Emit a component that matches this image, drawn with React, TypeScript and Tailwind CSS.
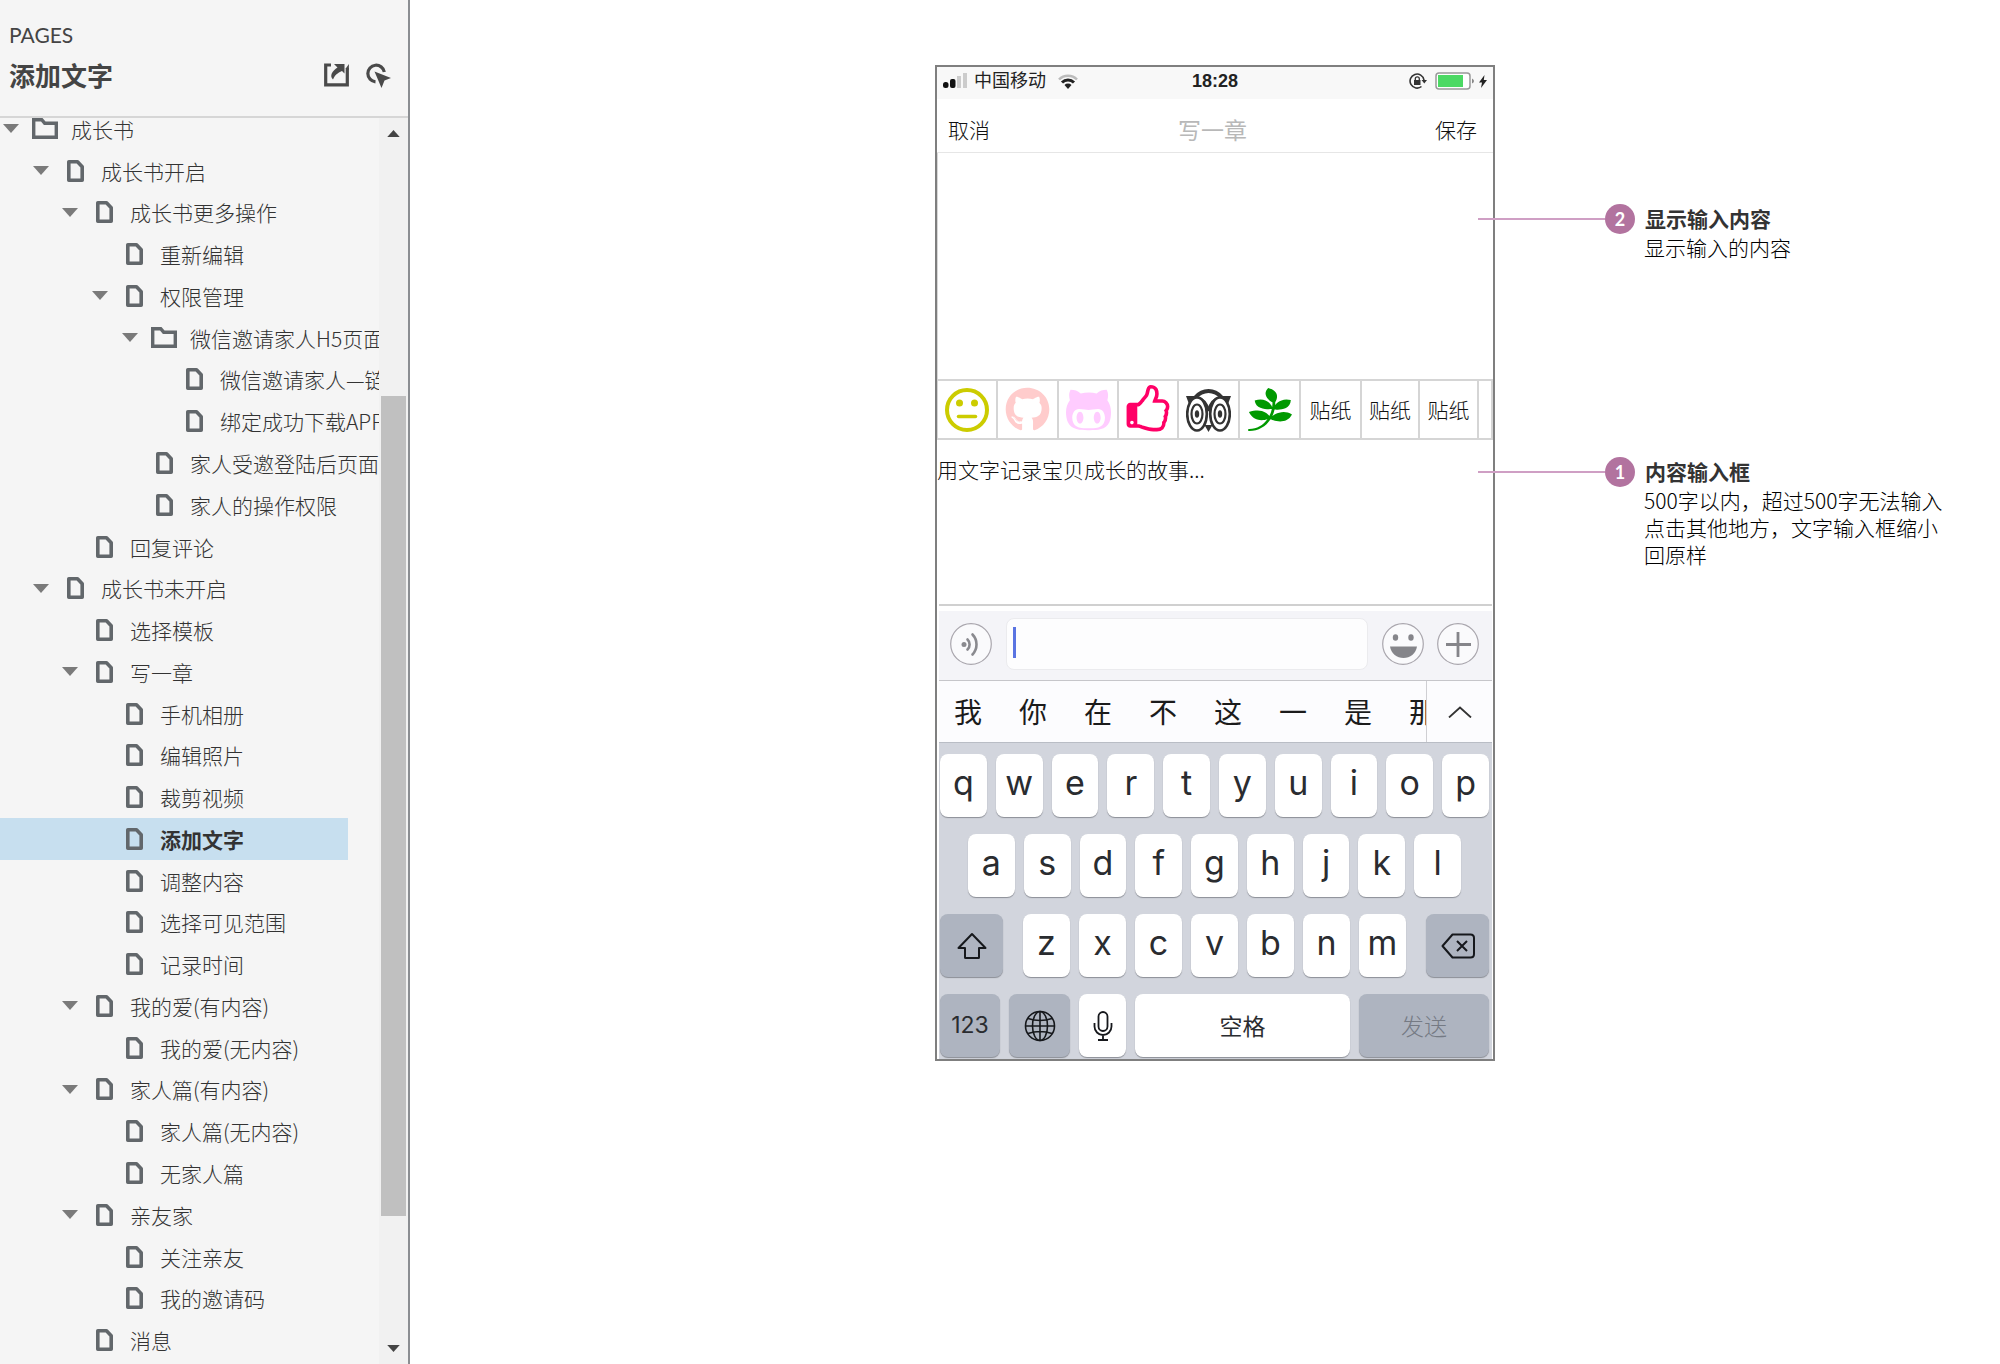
import type { ReactNode } from "react";
import { FaGithub, FaGithubAlt, FaPagelines } from "react-icons/fa";
import clsx from "clsx";

type TreeItem = {
  name: string;
  level: number;
  open?: boolean;
  folder?: boolean;
  active?: boolean;
};

const PAGES: TreeItem[] = [
  { name: "成长书", level: 0, open: true, folder: true },
  { name: "成长书开启", level: 1, open: true },
  { name: "成长书更多操作", level: 2, open: true },
  { name: "重新编辑", level: 3 },
  { name: "权限管理", level: 3, open: true },
  { name: "微信邀请家人H5页面", level: 4, open: true, folder: true },
  { name: "微信邀请家人—链接", level: 5 },
  { name: "绑定成功下载APP", level: 5 },
  { name: "家人受邀登陆后页面", level: 4 },
  { name: "家人的操作权限", level: 4 },
  { name: "回复评论", level: 2 },
  { name: "成长书未开启", level: 1, open: true },
  { name: "选择模板", level: 2 },
  { name: "写一章", level: 2, open: true },
  { name: "手机相册", level: 3 },
  { name: "编辑照片", level: 3 },
  { name: "裁剪视频", level: 3 },
  { name: "添加文字", level: 3, active: true },
  { name: "调整内容", level: 3 },
  { name: "选择可见范围", level: 3 },
  { name: "记录时间", level: 3 },
  { name: "我的爱(有内容)", level: 2, open: true },
  { name: "我的爱(无内容)", level: 3 },
  { name: "家人篇(有内容)", level: 2, open: true },
  { name: "家人篇(无内容)", level: 3 },
  { name: "无家人篇", level: 3 },
  { name: "亲友家", level: 2, open: true },
  { name: "关注亲友", level: 3 },
  { name: "我的邀请码", level: 3 },
  { name: "消息", level: 2 },
];

const INDENT = ["pl-[3px]", "pl-[33px]", "pl-[62px]", "pl-[92px]", "pl-[122px]", "pl-[152px]"];

const CANDIDATES = ["我", "你", "在", "不", "这", "一", "是", "那"];

/* ---------- icons ---------- */

function Triangle({ className }: { className: string }) {
  return (
    <svg viewBox="0 0 16 9" className={className} fill="currentColor" aria-hidden="true">
      <path d="M0 0h16L8 9z" />
    </svg>
  );
}

function DocIcon() {
  return (
    <svg width="17" height="22" viewBox="0 0 17 22" fill="none" stroke="#62676b" strokeWidth="3.6" aria-hidden="true">
      <path d="M1.800 1.800h8.700l4.700 5v13.400H1.800z" strokeLinejoin="round" />
    </svg>
  );
}

function FolderIcon() {
  return (
    <svg width="26" height="21" viewBox="0 0 26 21" fill="none" stroke="#62676b" strokeWidth="3.4" aria-hidden="true">
      <path d="M1.700 1.700h8l3 3.500h11.600v14.100H1.700z" />
    </svg>
  );
}

function ShareIcon() {
  return (
    <svg width="25" height="24" viewBox="0 0 25 24" aria-hidden="true">
      <path d="M7 2H1.700v19.800h21.600V5" fill="none" stroke="#4a4a4a" strokeWidth="3.2" />
      <path d="M10 1h10.500v9.500l-2.500-2.500C13.500 10 11 12 9 16.500 5 13 8.500 7.500 13.500 4.500z" fill="#4a4a4a" />
      <path d="M21.700 5.500 24.900 1v6z" fill="#4a4a4a" />
    </svg>
  );
}

function PointerIcon() {
  return (
    <svg width="25" height="25" viewBox="0 0 25 25" aria-hidden="true">
      <path d="M9.500 18.800A8.300 8.300 0 1 1 18.300 9" fill="none" stroke="#4a4a4a" strokeWidth="3.2" />
      <path d="M8.500 8.500 25 15l-6.500 2.500-3 7.500z" fill="#4a4a4a" />
    </svg>
  );
}

function MehIcon() {
  return (
    <svg width="44" height="44" viewBox="0 0 44 44" aria-hidden="true">
      <circle cx="22" cy="22" r="20" fill="none" stroke="#cccc00" strokeWidth="4" />
      <circle cx="14.500" cy="15" r="3.500" fill="#cccc00" />
      <circle cx="29.500" cy="15" r="3.500" fill="#cccc00" />
      <path d="M13.500 28.500h17" stroke="#cccc00" strokeWidth="3.5" strokeLinecap="round" />
    </svg>
  );
}

function ThumbIcon() {
  return (
    <svg width="50" height="50" viewBox="0 0 1792 1792" fill="#ff0066" aria-hidden="true">
      <path d="M384 1344q0-26-19-45t-45-19-45 19-19 45 19 45 45 19 45-19 19-45zm1152-576q0-51-39-89.500t-89-38.500h-352q0-58 48-159.500t48-160.500q0-98-32-145t-128-47q-26 26-38 85t-30.500 125.500-59.500 109.500q-22 23-77 91-4 5-23 30t-31.500 41-34.500 42.500-40 44-38.500 35.500-40 27-35.500 9h-32v640h32q13 0 31.500 3t33 6.500 38 11 35 11.500 35.500 12.500 29 10.500q211 73 342 73h121q192 0 192-167 0-26-5-56 30-16 47.500-52.500t17.500-73.500-18-69q53-50 53-119 0-25-10-55.500t-25-47.500q32-1 53.500-47t21.500-81zm128-1q0 89-49 163 9 33 9 69 0 77-38 144 3 21 3 43 0 101-60 178 1 139-85 219.500t-227 80.500h-129q-96 0-189.500-22.500t-216.500-65.500q-116-40-138-40h-288q-53 0-90.500-37.500t-37.500-90.500v-640q0-53 37.500-90.500t90.500-37.500h274q36-24 137-155 58-75 107-128 24-25 35.500-85.500t30.500-126.500 62-108q39-37 90-37 84 0 151 32.500t102 101.500 35 186q0 93-48 192h176q104 0 180 76t76 179z" />
    </svg>
  );
}

function OwlIcon() {
  return (
    <svg width="45" height="44" viewBox="0 0 45 44" fill="none" stroke="#333" aria-hidden="true">
      <path d="M0 8h8Q14 1 22.500 1T37 8h8l-3 8-7-5Q29 5 22.500 5T10 11l-7 5z" fill="#333" stroke="none" />
      <path d="M11 9.500Q21 12 22.500 23 24 12 34 9.500" strokeWidth="2.5" />
      <ellipse cx="11" cy="26" rx="9.800" ry="16.500" fill="#fff" strokeWidth="2.6" />
      <ellipse cx="34" cy="26" rx="9.800" ry="16.500" fill="#fff" strokeWidth="2.6" />
      <ellipse cx="11" cy="26" rx="5.500" ry="9.500" strokeWidth="2.2" />
      <ellipse cx="34" cy="26" rx="5.500" ry="9.500" strokeWidth="2.2" />
      <ellipse cx="11" cy="26" rx="2.200" ry="3.800" fill="#333" stroke="none" />
      <ellipse cx="34" cy="26" rx="2.200" ry="3.800" fill="#333" stroke="none" />
      <path d="M18.500 37h8l-4 7z" fill="#333" stroke="none" />
    </svg>
  );
}

function SignalIcon() {
  return (
    <svg width="25" height="16" viewBox="0 0 25 16" aria-hidden="true">
      <rect x="0" y="9" width="5.500" height="6" rx="2.500" fill="#111" />
      <rect x="7" y="6" width="5.500" height="9" rx="2" fill="#111" />
      <rect x="14" y="3" width="4" height="12" fill="#ccc" />
      <rect x="20" y="0" width="4" height="15" fill="#ccc" />
    </svg>
  );
}

function WifiIcon() {
  return (
    <svg width="20" height="15" viewBox="0 0 20 15" fill="none" aria-hidden="true">
      <path d="M1 5.500a12.500 12.500 0 0 1 18 0" stroke="#bbb" strokeWidth="2.5" />
      <path d="M4 8.500a8.500 8.500 0 0 1 12 0" stroke="#222" strokeWidth="3" />
      <path d="M6.500 11a5 5 0 0 1 7 0L10 15z" fill="#222" />
    </svg>
  );
}

function RotationLockIcon() {
  return (
    <svg width="18" height="16" viewBox="0 0 18 16" fill="none" stroke="#333" aria-hidden="true">
      <path d="M12.500 13.500A7 7 0 1 1 15 7" strokeWidth="1.6" />
      <path d="M12.500 7h5.500l-2.700 3.500z" fill="#333" stroke="none" />
      <rect x="5" y="7" width="6.500" height="5" fill="#333" stroke="none" />
      <path d="M6.300 7V5.800a2 2 0 0 1 4 0V7" strokeWidth="1.3" />
    </svg>
  );
}

function BatteryIcon() {
  return (
    <svg width="40" height="18" viewBox="0 0 40 18" aria-hidden="true">
      <rect x="1" y="1" width="34" height="16" rx="3" fill="#fff" stroke="#999" strokeWidth="1.5" />
      <rect x="3" y="3" width="25" height="12" fill="#4cd964" />
      <path d="M37 6.500v5q2-1 2-2.500t-2-2.500z" fill="#888" />
    </svg>
  );
}

function BoltIcon() {
  return (
    <svg width="8" height="13" viewBox="0 0 8 13" fill="#222" aria-hidden="true">
      <path d="M5.500 0 0 7.500h3L2 13l6-8H4.800z" />
    </svg>
  );
}

function VoiceIcon() {
  return (
    <svg width="42" height="42" viewBox="0 0 42 42" fill="none" stroke="#8a8a8f" aria-hidden="true">
      <circle cx="21" cy="21" r="20.300" fill="#fafafc" stroke="#a9a6ad" strokeWidth="1.2" />
      <circle cx="14" cy="21.500" r="2.500" fill="#8a8a8f" stroke="none" />
      <path d="M17.500 16.500a7 7 0 0 1 0 10M22.500 11.500a14.500 14.500 0 0 1 0 20" strokeWidth="2.6" strokeLinecap="round" />
    </svg>
  );
}

function SmileIcon() {
  return (
    <svg width="42" height="42" viewBox="0 0 42 42" fill="#85858a" aria-hidden="true">
      <circle cx="21" cy="21" r="20.300" fill="#fafafc" stroke="#a9a6ad" strokeWidth="1.2" />
      <ellipse cx="13.500" cy="14.500" rx="2.700" ry="3.300" />
      <ellipse cx="29" cy="14.500" rx="2.700" ry="3.300" />
      <path d="M8 23.500h27c-1 7-7 11.500-13.500 11.500S9 30.500 8 23.500z" />
    </svg>
  );
}

function PlusIcon() {
  return (
    <svg width="42" height="42" viewBox="0 0 42 42" fill="none" stroke="#85858a" strokeWidth="2.8" aria-hidden="true">
      <circle cx="21" cy="21" r="20.300" fill="#fafafc" stroke="#a9a6ad" strokeWidth="1.2" />
      <path d="M21 9v25M9 21.500h25" />
    </svg>
  );
}

function ChevronUpIcon() {
  return (
    <svg width="24" height="12" viewBox="0 0 24 12" fill="none" stroke="#333" strokeWidth="1.8" aria-hidden="true">
      <path d="M1 11.500 12 1.500l11 10" />
    </svg>
  );
}

function ShiftIcon() {
  return (
    <svg width="30" height="28" viewBox="0 0 30 28" fill="none" stroke="#16181c" strokeWidth="2" strokeLinejoin="round" aria-hidden="true">
      <path d="M15 2 28.500 16H22v9.500q0 .5-.5.5h-13q-.5 0-.5-.5V16H1.500z" />
    </svg>
  );
}

function BackspaceIcon() {
  return (
    <svg width="34" height="26" viewBox="0 0 34 26" fill="none" stroke="#16181c" strokeWidth="2" strokeLinejoin="round" aria-hidden="true">
      <path d="M11.500 1.500H29.500q3.500 0 3.500 3.500v16q0 3.500-3.500 3.500H11.500L1.500 13z" />
      <path d="M16 8l10 10M26 8 16 18" />
    </svg>
  );
}

function GlobeIcon() {
  return (
    <svg width="32" height="32" viewBox="0 0 32 32" fill="none" stroke="#16181c" strokeWidth="1.6" aria-hidden="true">
      <circle cx="16" cy="16" r="14.500" />
      <ellipse cx="16" cy="16" rx="7.500" ry="14.500" />
      <path d="M16 1.500v29M1.500 16h29M4 8.500q12 4 24 0M4 23.500q12-4 24 0" />
    </svg>
  );
}

function MicIcon() {
  return (
    <svg width="20" height="30" viewBox="0 0 20 30" fill="none" stroke="#16181c" strokeWidth="1.8" aria-hidden="true">
      <rect x="5.500" y="1" width="9" height="19" rx="4.500" />
      <path d="M1.500 12v3.500a8.500 8.500 0 0 0 17 0V12M10 24v5M5 29h10" />
    </svg>
  );
}

/* ---------- sidebar ---------- */

function TreeRow({ item }: { item: TreeItem }) {
  return (
    <li className="flex min-h-0 flex-1">
      <a
        href="#"
        aria-current={item.active ? "page" : undefined}
        className={clsx(
          "flex items-center whitespace-nowrap text-[21px] leading-6",
          INDENT[item.level],
          item.active ? "w-[348px] bg-[#c7dfef] font-bold text-[#333]" : "w-full font-light text-[#333]",
        )}
      >
        <span className="w-4 shrink-0 text-[#7a7a7a]">
          {item.open && <Triangle className="h-[9px] w-4" />}
        </span>
        <span className="mr-[13px] ml-[13px] flex w-[26px] shrink-0 justify-center">
          {item.folder ? <FolderIcon /> : <DocIcon />}
        </span>
        {item.name}
      </a>
    </li>
  );
}

function Sidebar() {
  return (
    <aside className="flex w-[410px] shrink-0 flex-col border-r-2 border-[#8b8e92] bg-[#f5f5f5]">
      <header className="border-b-2 border-[#d6d6d6] pt-[23px] pr-[17px] pb-[21px] pl-[9px]">
        <p className="font-[Lato,sans-serif] text-[21px] leading-6 text-[#444]">PAGES</p>
        <div className="mt-2 flex h-10 items-center justify-between">
          <h1 className="text-[26px] leading-9 font-bold text-[#444]">添加文字</h1>
          <div className="flex gap-[17px]">
            <button type="button" aria-label="share">
              <ShareIcon />
            </button>
            <button type="button" aria-label="hotspots">
              <PointerIcon />
            </button>
          </div>
        </div>
      </header>

      <div className="flex min-h-0 flex-1">
        <nav className="flex min-w-0 flex-1 flex-col overflow-hidden pb-[3px]">
          <ul className="-mt-2.5 flex min-h-0 flex-1 flex-col">
            {PAGES.map((item) => (
              <TreeRow key={item.name} item={item} />
            ))}
          </ul>
        </nav>

        {/* scrollbar */}
        <div className="flex w-[29px] flex-col bg-[#f1f1f1] px-0.5 text-[#444]">
          <button type="button" aria-label="scroll up" className="flex h-[31px] items-center justify-center">
            <Triangle className="h-[7px] w-[13px] rotate-180" />
          </button>
          <div className="grow-[247]" />
          <div className="grow-[820] bg-[#c0c0c0]" />
          <div className="grow-[117]" />
          <button type="button" aria-label="scroll down" className="flex h-[31px] items-center justify-center">
            <Triangle className="h-[7px] w-[13px]" />
          </button>
        </div>
      </div>
    </aside>
  );
}

/* ---------- phone ---------- */

function Sticker({ className, children }: { className: string; children?: ReactNode }) {
  return (
    <button
      type="button"
      className={clsx("flex shrink-0 items-center justify-center border-r-2 border-[#d5d5d5]", className)}
    >
      {children}
    </button>
  );
}

function StickerBar() {
  return (
    <div className="flex h-[61px] border-y-2 border-l border-[#d5d5d5] text-[21px] font-light text-[#111]">
      <Sticker className="w-[60px]">
        <MehIcon />
      </Sticker>
      <Sticker className="w-[61px]">
        <FaGithub size={45} color="#ffcccc" />
      </Sticker>
      <Sticker className="w-[60px]">
        <FaGithubAlt className="h-[54px] w-[45px]" preserveAspectRatio="none" color="#ffccff" />
      </Sticker>
      <Sticker className="w-[60px]">
        <ThumbIcon />
      </Sticker>
      <Sticker className="w-[61px]">
        <OwlIcon />
      </Sticker>
      <Sticker className="w-[61px]">
        <FaPagelines className="h-[45px] w-[44px]" preserveAspectRatio="none" color="#009900" />
      </Sticker>
      <Sticker className="w-[61px]">贴纸</Sticker>
      <Sticker className="w-[58px]">贴纸</Sticker>
      <Sticker className="w-[59px]">贴纸</Sticker>
      <Sticker className="flex-1" />
    </div>
  );
}

function Key({ className, dark, label, children }: { className?: string; dark?: boolean; label?: string; children: ReactNode }) {
  return (
    <button
      type="button"
      aria-label={label}
      className={clsx(
        "flex h-[63px] items-center justify-center rounded-lg shadow-[0_1px_1px_#8b8e96]",
        dark ? "bg-[#aeb4c0]" : "bg-white",
        className ?? "min-w-0 flex-1",
      )}
    >
      {children}
    </button>
  );
}

function Letters({ keys }: { keys: string }) {
  return keys.split("").map((k) => (
    <Key key={k}>
      <span className="pb-1.5 font-[Inter,sans-serif] text-[34px] leading-10">{k}</span>
    </Key>
  ));
}

function Keyboard() {
  return (
    <div className="flex flex-col gap-[17px] bg-[#d2d5dd] pt-[11px] pr-[3px] pb-0.5 pl-px text-[#2a2c30]">
      <div className="flex gap-[9px]">
        <Letters keys="qwertyuiop" />
      </div>
      <div className="flex gap-[9px] px-7">
        <Letters keys="asdfghjkl" />
      </div>
      <div className="flex gap-5">
        <Key dark className="w-[63px]" label="shift">
          <ShiftIcon />
        </Key>
        <div className="flex flex-1 gap-[9px]">
          <Letters keys="zxcvbnm" />
        </div>
        <Key dark className="w-[63px]" label="delete">
          <BackspaceIcon />
        </Key>
      </div>
      <div className="flex gap-[9px] text-[23px]">
        <Key dark className="w-[60px]">
          <span className="font-[Inter,sans-serif]">123</span>
        </Key>
        <Key dark className="w-[61px]" label="globe">
          <GlobeIcon />
        </Key>
        <Key className="w-[47px]" label="dictate">
          <MicIcon />
        </Key>
        <Key>空格</Key>
        <Key dark className="w-[130px]">
          <span className="font-light text-[#757a84]">发送</span>
        </Key>
      </div>
    </div>
  );
}

function Phone() {
  return (
    <section className="w-[560px] shrink-0 self-start border-2 border-[#7f7f7f] bg-white">
      {/* status bar */}
      <div className="grid h-8 grid-cols-[1fr_auto_1fr] items-center bg-[#f8f8f8] px-1.5 pb-1 font-['Liberation_Sans','Noto_Sans_CJK_SC',sans-serif] text-[18px] leading-6 text-[#222]">
        <div className="flex items-center gap-1.5">
          <SignalIcon />
          <span>中国移动</span>
          <span className="ml-1.5">
            <WifiIcon />
          </span>
        </div>
        <span className="font-bold">18:28</span>
        <div className="flex items-center justify-end gap-1">
          <RotationLockIcon />
          <span className="ml-1">
            <BatteryIcon />
          </span>
          <BoltIcon />
        </div>
      </div>

      {/* nav bar */}
      <div className="flex h-[54px] items-center justify-between border-b border-[#e6e6e6] pt-2 pr-4 pl-[11px] text-[21px] font-light text-[#111]">
        <button type="button">取消</button>
        <h2 className="text-[23px] font-normal text-[#b8b8b8]">写一章</h2>
        <button type="button">保存</button>
      </div>

      <div className="h-[226px] border-l border-[#d7d7d7]" />
      <StickerBar />
      <textarea
        aria-label="内容输入框"
        placeholder="用文字记录宝贝成长的故事..."
        className="block h-[164px] w-full resize-none pt-3.5 text-[21px] leading-[30px] font-light placeholder:text-[#111]"
      />

      <div className="pr-px pl-0.5">
        <div className="border-t-2 border-[#d0d0d0] pt-[5px]">
          <div className="flex h-[70px] items-center border-b border-[#c6c6ca] bg-[#f4f4f8] pr-[13px] pb-1 pl-[11px]">
            <button type="button" aria-label="voice">
              <VoiceIcon />
            </button>
            <div className="relative mr-3.5 ml-3.5 flex-1">
              <input
                type="text"
                aria-label="message"
                className="block h-[52px] w-full rounded-lg border border-[#ebebee] bg-[#fdfdfe] px-2"
              />
              <span className="absolute top-[9px] left-[7px] h-[31px] w-[3px] bg-[#5a74e2]" />
            </div>
            <button type="button" aria-label="emoji" className="mr-[13px]">
              <SmileIcon />
            </button>
            <button type="button" aria-label="more">
              <PlusIcon />
            </button>
          </div>
        </div>

        {/* candidates */}
        <div className="flex h-[62px] border-b border-[#b9bdc5] bg-[#fcfcfe] text-[#1b1b1b]">
          <div className="flex flex-1 gap-[37px] overflow-hidden pb-0.5 pl-[15px] text-[28px]">
            {CANDIDATES.map((c) => (
              <button key={c} type="button" className="shrink-0">
                {c}
              </button>
            ))}
          </div>
          <button type="button" aria-label="expand" className="flex w-[66px] items-center justify-center border-l border-[#cfcfd3]">
            <ChevronUpIcon />
          </button>
        </div>

        <Keyboard />
      </div>
    </section>
  );
}

/* ---------- annotations ---------- */

function Note({ no, title, children }: { no: number; title: string; children: ReactNode }) {
  return (
    <article>
      <div className="flex h-[30px] items-center">
        <span className="h-0.5 w-[127px] bg-[#cf9fc4]" />
        <span className="flex size-[30px] items-center justify-center rounded-full bg-[#b2739f] font-[Lato,sans-serif] text-[18px] font-bold text-white">
          {no}
        </span>
        <h3 className="ml-2.5 pb-0.5 text-[21px] leading-7 font-bold text-[#333]">{title}</h3>
      </div>
      <div className="ml-[166px] w-[308px] text-[21px] leading-[27px] font-light text-black">{children}</div>
    </article>
  );
}

export default function App() {
  return (
    <div className="flex h-screen bg-white font-['Noto_Sans_CJK_SC',sans-serif]">
      <Sidebar />
      <main className="flex min-w-0 flex-1 overflow-hidden pt-[65px] pl-[525px]">
        <Phone />
        <div className="relative -ml-[17px] flex shrink-0 flex-col gap-[196px] self-start pt-[139px]">
          <Note no={2} title="显示输入内容">
            <p>显示输入的内容</p>
          </Note>
          <Note no={1} title="内容输入框">
            <p>500字以内，超过500字无法输入</p>
            <p>点击其他地方，文字输入框缩小回原样</p>
          </Note>
        </div>
      </main>
    </div>
  );
}
